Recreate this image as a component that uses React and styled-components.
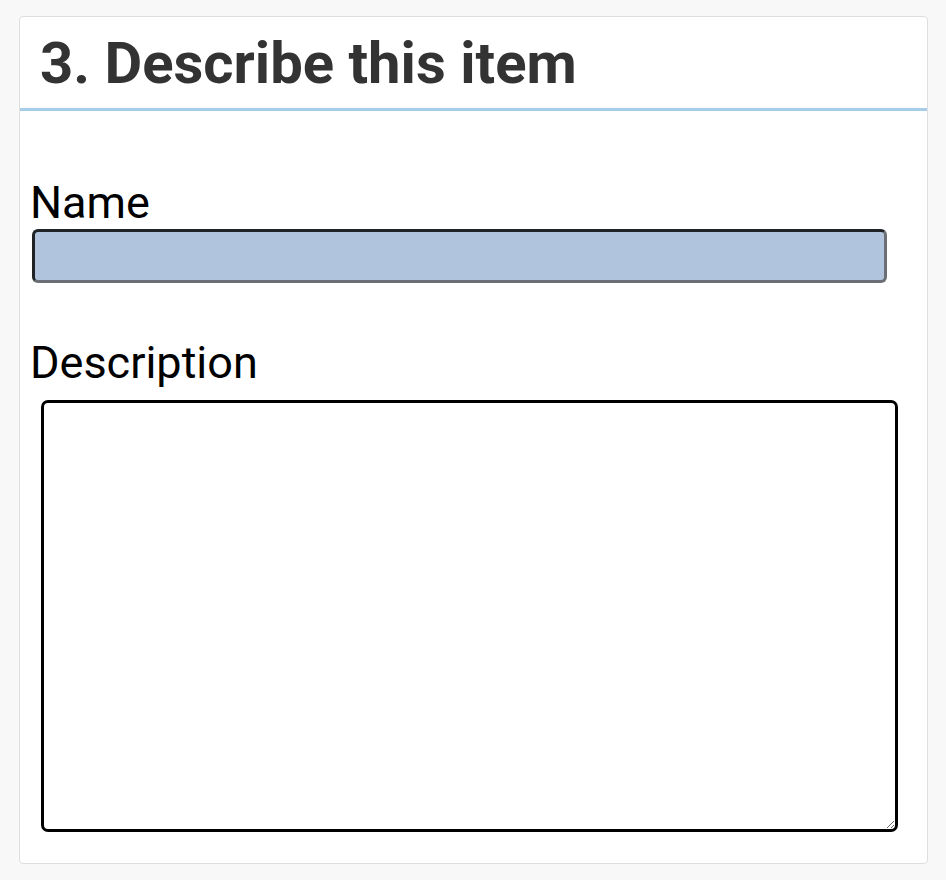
import styled, { createGlobalStyle } from "styled-components";

const GlobalStyle = createGlobalStyle`
  html, body {
    margin: 0;
    padding: 0;
    background-color: #f8f8f8;
    font-family: Roboto, "Liberation Sans", sans-serif;
  }
`;

const Page = styled.div`
  padding: 16px 18px 16px 19px;
`;

const Card = styled.section`
  display: flex;
  flex-direction: column;
  width: 909px;
  height: 848px;
  box-sizing: border-box;
  background-color: #ffffff;
  border: 1px solid #dfdfdf;
  border-radius: 4px;
`;

const CardHeader = styled.div`
  padding: 12px 20px 11px 20px;
  border-bottom: 3px solid #a8cde9;
`;

const Title = styled.h2`
  margin: 0;
  font-size: 58px;
  font-weight: 700;
  color: #333333;
`;

const CardBody = styled.div`
  display: flex;
  flex-direction: column;
  padding: 65px 0 0 10px;
`;

const Label = styled.label`
  font-size: 45px;
  color: #000000;
  line-height: 53px;
`;

const NameInput = styled.input`
  box-sizing: border-box;
  width: 855px;
  height: 54px;
  margin: 0 0 53px 2px;
  background-color: #b0c4de;
  border: 3px solid;
  border-color: #1f2326 #6b6e74 #6b6e74 #1f2326;
  border-radius: 6px;
  outline: none;
`;

const DescInput = styled.textarea`
  box-sizing: border-box;
  width: 857px;
  height: 432px;
  margin: 11px 0 0 11px;
  background-color: #ffffff;
  border: 3px solid #000000;
  border-radius: 7px;
  outline: none;
  resize: both;
`;

const App = () => {
  return (
    <Page>
      <GlobalStyle />
      <Card>
        <CardHeader>
          <Title>3. Describe this item</Title>
        </CardHeader>
        <CardBody>
          <Label htmlFor="name">Name</Label>
          <NameInput id="name" type="text" />
          <Label htmlFor="desc">Description</Label>
          <DescInput id="desc" />
        </CardBody>
      </Card>
    </Page>
  );
};

export default App;
